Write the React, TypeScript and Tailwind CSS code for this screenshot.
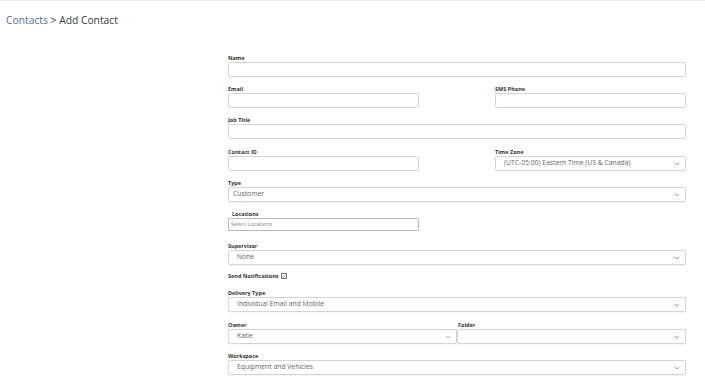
import React from 'react';

const font = { fontFamily: '"Open Sans", "Liberation Sans", sans-serif' };

const Chevron: React.FC = () => (
  <svg className="absolute right-[5px] top-1/2 -translate-y-1/2" width="6" height="4" viewBox="0 0 6 4">
    <path d="M0.8 0.8 L3 3 L5.2 0.8" fill="none" stroke="#888" strokeWidth="0.8" />
  </svg>
);

const Label: React.FC<{ text: string; className?: string }> = ({ text, className = '' }) => (
  <div className={`h-[8px] text-[5.5px] font-bold leading-[8px] text-[#333] ${className}`}>{text}</div>
);

const TextBox: React.FC<{ className?: string }> = ({ className = '' }) => (
  <div className={`h-[15px] rounded-[2px] border border-[#d4d4d4] bg-white ${className}`} />
);

const Select: React.FC<{ value?: string; pad?: string; className?: string }> = ({ value = '', pad = 'pl-[8px]', className = '' }) => (
  <div className={`relative flex h-[15px] items-center rounded-[2px] border border-[#d4d4d4] bg-white text-[6.8px] text-[#666] shadow-[0_1px_1px_rgba(0,0,0,0.04)] ${pad} ${className}`}>
    <span>{value}</span>
    <Chevron />
  </div>
);

export default function App() {
  return (
    <div className="h-[378px] w-[705px] overflow-hidden border-t border-[#eeeeee] bg-white" style={font}>
      <div className="pl-[6px] pt-[10px] text-[10.3px] leading-[18px] text-[#3a3a3a]">
        <span className="text-[#4d6f99]">Contacts</span> &gt; Add Contact
      </div>

      <div className="ml-[228px] mt-[25px] w-[458px]">
        <Label text="Name" />
        <TextBox className="mb-[8px]" />

        <div className="mb-[8px] flex justify-between">
          <div className="w-[191px]">
            <Label text="Email" />
            <TextBox />
          </div>
          <div className="w-[191px]">
            <Label text="SMS Phone" />
            <TextBox />
          </div>
        </div>

        <Label text="Job Title" />
        <TextBox className="mb-[9px]" />

        <div className="mb-[8px] flex justify-between">
          <div className="w-[191px]">
            <Label text="Contact ID" />
            <TextBox />
          </div>
          <div className="w-[191px]">
            <Label text="Time Zone" />
            <Select value="(UTC-05:00) Eastern Time (US & Canada)" />
          </div>
        </div>

        <Label text="Type" />
        <Select value="Customer" pad="pl-[4px]" className="mb-[8px]" />

        <Label text="Locations" className="pl-[4px]" />
        <div className="mb-[11px] flex h-[13px] w-[191px] items-center rounded-[1px] border border-[#b8b8b8] bg-white pl-[2px] text-[5.5px] text-[#888]">
          Select Locations
        </div>

        <Label text="Supervisor" />
        <Select value="None" className="mb-[7px]" />

        <div className="mb-[9px] flex h-[8px] items-center text-[5.5px] font-bold text-[#333]">
          Send Notifications
          <span className="ml-[2px] flex h-[6px] w-[6px] items-center justify-center border border-[#777] bg-white">
            <svg width="5" height="5" viewBox="0 0 5 5">
              <path d="M0.8 2.6 L2 3.8 L4.2 1" fill="none" stroke="#444" strokeWidth="0.8" />
            </svg>
          </span>
        </div>

        <Label text="Delivery Type" />
        <Select value="Individual Email and Mobile" className="mb-[9px]" />

        <div className="mb-[8px] flex">
          <div className="w-[229px]">
            <Label text="Owner" />
            <Select value="Katie" />
          </div>
          <div className="flex-1">
            <Label text="Folder" className="pl-[1px]" />
            <Select />
          </div>
        </div>

        <Label text="Workspace" />
        <Select value="Equipment and Vehicles" />
      </div>
    </div>
  );
}
